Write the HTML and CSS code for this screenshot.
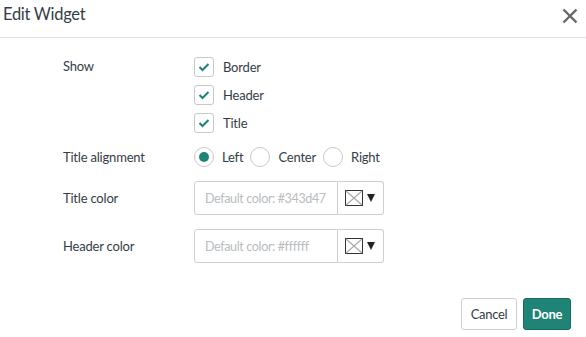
FILE: index.html
```html
<!DOCTYPE html>
<html>
<head>
<meta charset="utf-8">
<link rel="stylesheet" href="styles.css">
</head>
<body>
<div class="modal">
  <div class="header">
    <div class="title">Edit Widget</div>
    <button class="close" aria-label="Close">
      <svg width="16" height="16" viewBox="0 0 16 16"><path d="M1.5 1.5 L14.5 14.5 M14.5 1.5 L1.5 14.5" stroke="#666" stroke-width="2.4"/></svg>
    </button>
  </div>
  <div class="body">
    <div class="row row-show">
      <div class="label">Show</div>
      <div class="checks">
        <label class="check"><span class="box"><svg width="12" height="10" viewBox="0 0 12 10"><path d="M1.5 5 L4.5 8 L10.5 2" fill="none" stroke="#1f8476" stroke-width="2"/></svg></span>Border</label>
        <label class="check"><span class="box"><svg width="12" height="10" viewBox="0 0 12 10"><path d="M1.5 5 L4.5 8 L10.5 2" fill="none" stroke="#1f8476" stroke-width="2"/></svg></span>Header</label>
        <label class="check"><span class="box"><svg width="12" height="10" viewBox="0 0 12 10"><path d="M1.5 5 L4.5 8 L10.5 2" fill="none" stroke="#1f8476" stroke-width="2"/></svg></span>Title</label>
      </div>
    </div>
    <div class="row row-align">
      <div class="label">Title alignment</div>
      <div class="radios">
        <label class="radio"><span class="circle on"></span>Left</label>
        <label class="radio"><span class="circle"></span>Center</label>
        <label class="radio"><span class="circle"></span>Right</label>
      </div>
    </div>
    <div class="row row-color">
      <div class="label">Title color</div>
      <div class="picker">
        <div class="input">Default color: #343d47</div>
        <div class="swatch-btn">
          <svg width="18" height="16" viewBox="0 0 18 16"><rect x="0.5" y="0.5" width="17" height="15" fill="#fff" stroke="#333"/><path d="M1 1 L17 15 M17 1 L1 15" stroke="#aaa" stroke-width="1.2"/></svg>
          <span class="caret"></span>
        </div>
      </div>
    </div>
    <div class="row row-color2">
      <div class="label">Header color</div>
      <div class="picker">
        <div class="input">Default color: #ffffff</div>
        <div class="swatch-btn">
          <svg width="18" height="16" viewBox="0 0 18 16"><rect x="0.5" y="0.5" width="17" height="15" fill="#fff" stroke="#333"/><path d="M1 1 L17 15 M17 1 L1 15" stroke="#aaa" stroke-width="1.2"/></svg>
          <span class="caret"></span>
        </div>
      </div>
    </div>
  </div>
  <div class="footer">
    <button class="btn cancel">Cancel</button>
    <button class="btn done">Done</button>
  </div>
</div>
</body>
</html>
```

FILE: styles.css
```css
* { box-sizing: border-box; }
html, body { margin: 0; padding: 0; background: #fff; }
body {
  font-family: "Source Sans Pro", Lato, "Noto Sans", sans-serif;
  color: #343d47;
  font-size: 13px;
  letter-spacing: -0.2px;
  width: 586px;
  height: 337px;
  overflow: hidden;
}
.modal { width: 586px; }
.header {
  height: 38px;
  border-bottom: 1px solid #e2e2e2;
  display: flex;
  align-items: center;
  justify-content: space-between;
  padding: 0 8px 0 3px;
}
.title { font-size: 16.5px; color: #343d47; margin-top: -9px; letter-spacing: -0.3px; }
.close {
  border: 0; background: none; padding: 0; margin-top: -6px;
  width: 16px; height: 16px; display: flex;
}
.body { padding: 19px 0 0 63px; }
.row { display: flex; }
.label { width: 131px; }
.row-show .label { padding-top: 1px; }
.checks { display: flex; flex-direction: column; gap: 8px; }
.check, .radio { display: flex; align-items: center; height: 20px; }
.box {
  width: 20px; height: 20px;
  border: 1px solid #c8c8c8; border-radius: 3px;
  display: flex; align-items: center; justify-content: center;
  margin-right: 9px;
}
.row-align { margin-top: 14px; align-items: center; }
.radios { display: flex; }
.radio { margin-right: 7px; }
.circle {
  width: 20px; height: 20px; border-radius: 50%;
  border: 1px solid #c8c8c8; margin-right: 8px;
  display: flex; align-items: center; justify-content: center;
}
.circle.on::after {
  content: ""; width: 10px; height: 10px; border-radius: 50%; background: #1f8476;
}
.row-color { margin-top: 14px; align-items: center; }
.row-color2 { margin-top: 14px; align-items: center; }
.picker { display: flex; height: 34px; }
.input {
  width: 144px; height: 34px;
  border: 1px solid #cfcfcf; border-radius: 3px 0 0 3px;
  color: #b8bcc0; padding: 0 0 0 10px;
  font-size: 12.5px; letter-spacing: -0.35px; white-space: nowrap; overflow: hidden;
  display: flex; align-items: center;
}
.swatch-btn {
  width: 46px; height: 34px;
  border: 1px solid #cfcfcf; border-left: 0; border-radius: 0 3px 3px 0;
  display: flex; align-items: center; padding-left: 7px; gap: 4px;
}
.caret {
  width: 0; height: 0;
  border-left: 4px solid transparent; border-right: 4px solid transparent;
  border-top: 8px solid #222;
}
.footer {
  display: flex; justify-content: flex-end; gap: 6px;
  padding: 35px 15px 0 0;
}
.btn {
  font-family: inherit; font-size: 13px; height: 32px; letter-spacing: -0.3px;
  border-radius: 3px; padding: 0; cursor: pointer;
}
.cancel { background: #fff; border: 1px solid #cfcfcf; color: #343d47; width: 56px; }
.done { background: #1f8476; border: 1px solid #176a5e; color: #fff; font-weight: bold; width: 48px; }
```
